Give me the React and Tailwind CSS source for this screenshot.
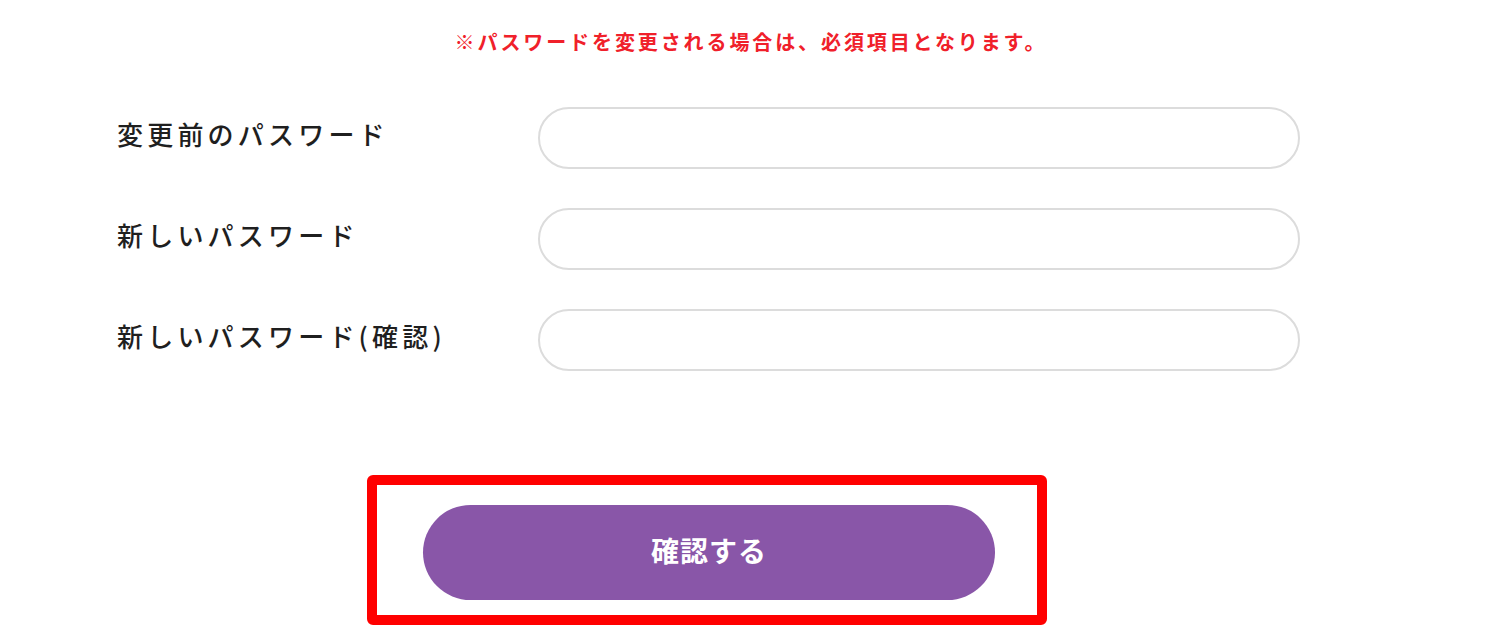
import React from 'react';

const fields = [
  { name: 'current', label: '変更前のパスワード' },
  { name: 'next', label: '新しいパスワード' },
  { name: 'confirm', label: '新しいパスワード(確認)' },
];

const App = () => {
  return (
    <div
      className="w-[1502px] h-[633px] bg-white overflow-hidden"
      style={{ fontFamily: '"Noto Sans CJK JP", "Noto Sans", sans-serif' }}
    >
      <p className="pt-[28px] text-center text-[20px] leading-[28px] font-bold tracking-[2.9px] text-[#f0202a]">
        ※パスワードを変更される場合は、必須項目となります。
      </p>

      <div className="mt-[51px] pl-[117px] flex flex-col gap-[39px]">
        {fields.map((f) => (
          <div key={f.name} className="flex items-center">
            <label className="w-[421px] pb-[10px] text-[26px] tracking-[4.2px] font-medium text-[#1f1f1f]">
              {f.label}
            </label>
            <input
              type="password"
              name={f.name}
              className="w-[762px] h-[62px] rounded-full border-2 border-[#dcdcdc] px-6 focus:outline-none"
            />
          </div>
        ))}
      </div>

      <div className="mt-[104px] ml-[367px] w-[680px] h-[150px] border-[10px] border-[#ff0000] rounded-[6px] flex items-center pl-[46px] pt-[4px]">
        <button
          type="button"
          className="w-[572px] h-[95px] rounded-full bg-[#8956a8] text-white text-[28px] font-bold tracking-[1px] pb-[4px]"
        >
          確認する
        </button>
      </div>
    </div>
  );
};

export default App;
